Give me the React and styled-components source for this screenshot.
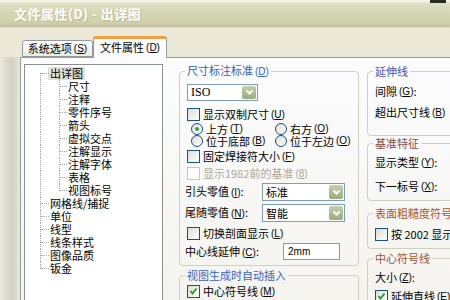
import React from 'react';
import styled, { createGlobalStyle } from 'styled-components';

const GlobalStyle = createGlobalStyle`
  html, body {
    margin: 0;
    padding: 0;
  }
  body {
    width: 450px;
    height: 300px;
    overflow: hidden;
    background: #ece9d8;
    font-family: "Noto Sans CJK SC", "Liberation Sans", sans-serif;
    font-size: 11px;
    line-height: 13px;
    color: #000;
  }
`;

const Window = styled.div`
  width: 450px;
  height: 300px;
  overflow: hidden;
  display: flex;
  flex-direction: column;
  background: #ece9d8;
`;

const TitleBar = styled.div`
  height: 27px;
  flex: none;
  display: flex;
  align-items: center;
  justify-content: space-between;
  padding-left: 14px;
  background: linear-gradient(#f2f2e6 0, #f2f2e6 2px, #dfe0c4 3px, #d4d5b2 14px, #cfcfab 23px, #c6c2a2 26px);
  border-bottom: 1px solid #ddd9c4;
`;

const TitleText = styled.span`
  font-size: 13px;
  font-weight: bold;
  color: #fff;
  letter-spacing: 0.5px;
  text-shadow: 1px 1px 0 #bdbb9c;
`;

const TitleCorner = styled.span`
  align-self: flex-start;
  width: 16px;
  height: 3px;
  margin-right: 4px;
  background: #2b2b26;
`;

const TabStrip = styled.div`
  height: 29px;
  flex: none;
  display: flex;
  align-items: flex-end;
  padding-left: 22px;
`;

const Tab = styled.div`
  position: relative;
  z-index: ${(p) => (p.$active ? 1 : 0)};
  box-sizing: border-box;
  width: ${(p) => (p.$active ? 74 : 71)}px;
  height: ${(p) => (p.$active ? 22 : 17)}px;
  margin-bottom: ${(p) => (p.$active ? -1 : 0)}px;
  display: flex;
  align-items: center;
  justify-content: center;
  border: 1px solid #919b9c;
  border-bottom: ${(p) => (p.$active ? 'none' : '1px solid #919b9c')};
  border-top: ${(p) => (p.$active ? '3px solid #f0a040' : '1px solid #919b9c')};
  border-radius: 3px 3px 0 0;
  background: ${(p) => (p.$active ? '#fcfcfe' : 'linear-gradient(#ffffff, #ecebe6)')};
  padding-bottom: ${(p) => (p.$active ? 2 : 0)}px;
`;

const Body = styled.div`
  flex: none;
  height: 260px;
  display: flex;
`;

const LeftStrip = styled.div`
  width: 20px;
  flex: none;
  background: linear-gradient(90deg, #ebe9de 0, #dedcd1 6px, #d2d0c5 12px, #dfddd2 17px, #ebe9dd 20px);
`;

const TabPanel = styled.div`
  flex: 1;
  display: flex;
  padding: 6px 0 0 3px;
  border-left: 1px solid #919b9c;
  border-top: 1px solid #919b9c;
  background: linear-gradient(#fcfcfe, #f4f3ee);
`;

const Tree = styled.div`
  width: 139px;
  flex: none;
  box-sizing: border-box;
  border: 1px solid #8c8f94;
  border-bottom: none;
  background: #fff;
  padding: 2px 0 0 15px;
`;

const TreeRow = styled.div`
  display: flex;
  height: 13px;
  line-height: 13px;
  white-space: nowrap;
`;

const Guide = styled.span`
  position: relative;
  flex: none;
  width: ${(p) => p.$w}px;
  height: 13px;

  &::before {
    content: '';
    position: absolute;
    left: 0;
    top: ${(p) => (p.$line === 'lower' ? '6px' : '0')};
    bottom: ${(p) => (p.$line === 'upper' ? '6px' : '0')};
    border-left: 1px dotted #a3a3a3;
  }

  &::after {
    content: ${(p) => (p.$branch ? "''" : 'none')};
    position: absolute;
    left: 1px;
    top: 6px;
    width: ${(p) => p.$w - 2}px;
    border-top: 1px dotted #a3a3a3;
  }
`;

const TreeLabel = styled.span`
  padding: 0 2px;
  margin-left: -2px;
  background: ${(p) => (p.$selected ? '#e0dfd9' : 'transparent')};
`;

const Columns = styled.div`
  display: flex;
  gap: 8px;
  margin-left: 16px;
  align-items: flex-start;
`;

const Column = styled.div`
  width: ${(p) => p.$w}px;
  flex: none;
  display: flex;
  flex-direction: column;
`;

const Group = styled.fieldset`
  margin: ${(p) => p.$mt || 0}px 0 0;
  padding: ${(p) => p.$pad};
  border: 1px solid #d0d0bf;
  border-radius: 4px;
  min-width: 0;
  display: flex;
  flex-direction: column;
`;

const Legend = styled.legend`
  padding: 0 2px;
  margin-left: -2px;
  line-height: 13px;
  color: ${(p) => p.$color || '#2f5fcc'};
  white-space: nowrap;
`;

const Key = styled.span`
  font-family: "Liberation Sans", sans-serif;
  font-size: 10px;
  margin-left: 2px;
`;

const Line = styled.div`
  display: flex;
  align-items: center;
  height: ${(p) => p.$h || 13}px;
  margin-top: ${(p) => p.$mt || 0}px;
  margin-left: ${(p) => p.$ml || 0}px;
  white-space: nowrap;
  color: ${(p) => (p.$disabled ? '#aca899' : '#000')};
`;

const CheckBox = styled.span`
  width: 11px;
  height: 11px;
  flex: none;
  margin-right: 3px;
  display: flex;
  align-items: center;
  justify-content: center;
  border: 1px solid ${(p) => (p.$disabled ? '#cac8bb' : '#1c5180')};
  background: ${(p) => (p.$disabled ? '#fff' : 'linear-gradient(135deg, #dcdcd7, #ffffff)')};
`;

const RadioGrid = styled.div`
  display: grid;
  grid-template-columns: 84px auto;
  grid-auto-rows: 12px;
  margin-top: ${(p) => p.$mt}px;
  margin-left: 4px;
  line-height: 12px;
`;

const RadioItem = styled.div`
  display: flex;
  align-items: center;
  height: 12px;
  white-space: nowrap;
`;

const RadioDot = styled.span`
  width: 10px;
  height: 10px;
  flex: none;
  margin-right: 3px;
  border-radius: 50%;
  border: 1px solid #1c5180;
  background: linear-gradient(135deg, #dcdcd7, #ffffff);
  display: flex;
  align-items: center;
  justify-content: center;

  &::after {
    content: ${(p) => (p.$on ? "''" : 'none')};
    width: 4px;
    height: 4px;
    border-radius: 50%;
    background: #36a83a;
  }
`;

const FieldLabel = styled.span`
  width: ${(p) => p.$w}px;
  flex: none;
`;

const SelectBox = styled.div`
  width: ${(p) => p.$w}px;
  height: ${(p) => p.$h}px;
  box-sizing: border-box;
  flex: none;
  display: flex;
  align-items: center;
  justify-content: space-between;
  padding-left: 3px;
  border: 1px solid #7f9db9;
  background: #fff;
  font-family: ${(p) => (p.$serif ? '"Liberation Serif", serif' : 'inherit')};
  font-size: ${(p) => (p.$serif ? 12 : 11)}px;
`;

const DropButton = styled.span`
  align-self: stretch;
  width: 14px;
  margin: 1px;
  border-radius: 2px;
  background: linear-gradient(#c4d0ad, #98ad7d);
  display: flex;
  align-items: center;
  justify-content: center;
`;

const TextBox = styled.div`
  width: ${(p) => p.$w}px;
  height: 17px;
  box-sizing: border-box;
  padding-left: 4px;
  display: flex;
  align-items: center;
  border: 1px solid #7f9db9;
  background: #fff;
  font-family: "Liberation Sans", sans-serif;
  font-size: 10px;
`;

const Chevron = () => (
  <svg width="9" height="7" viewBox="0 0 9 7">
    <polyline points="1.5,1.5 4.5,4.5 7.5,1.5" fill="none" stroke="#fff" strokeWidth="2" />
  </svg>
);

const Tick = () => (
  <svg width="9" height="9" viewBox="0 0 9 9">
    <polyline points="1.5,4 3.5,6.5 7.5,1.5" fill="none" stroke="#21a121" strokeWidth="1.8" />
  </svg>
);

const Mn = ({ k }) => (
  <Key>
    (<u>{k}</u>)
  </Key>
);

const Check = ({ label, k, checked, disabled, mt }) => (
  <Line $mt={mt} $disabled={disabled}>
    <CheckBox $disabled={disabled}>{checked && <Tick />}</CheckBox>
    {label}
    {k && <Mn k={k} />}
  </Line>
);

const Radio = ({ label, k, on }) => (
  <RadioItem>
    <RadioDot $on={on} />
    {label}
    <Mn k={k} />
  </RadioItem>
);

const Select = ({ w, h, value, serif }) => (
  <SelectBox $w={w} $h={h} $serif={serif}>
    {value}
    <DropButton>
      <Chevron />
    </DropButton>
  </SelectBox>
);

const treeItems = [
  { label: '出详图', level: 0, line: 'lower', selected: true },
  { label: '尺寸', level: 1 },
  { label: '注释', level: 1 },
  { label: '零件序号', level: 1 },
  { label: '箭头', level: 1 },
  { label: '虚拟交点', level: 1 },
  { label: '注解显示', level: 1 },
  { label: '注解字体', level: 1 },
  { label: '表格', level: 1 },
  { label: '视图标号', level: 1, line: 'upper' },
  { label: '网格线/捕捉', level: 0 },
  { label: '单位', level: 0 },
  { label: '线型', level: 0 },
  { label: '线条样式', level: 0 },
  { label: '图像品质', level: 0 },
  { label: '钣金', level: 0, line: 'upper' },
];

export default function App() {
  return (
    <Window>
      <GlobalStyle />
      <TitleBar>
        <TitleText>文件属性(D) - 出详图</TitleText>
        <TitleCorner />
      </TitleBar>

      <TabStrip>
        <Tab>
          系统选项
          <Mn k="S" />
        </Tab>
        <Tab $active>
          文件属性
          <Mn k="D" />
        </Tab>
      </TabStrip>

      <Body>
        <LeftStrip />
        <TabPanel>
          <Tree>
            {treeItems.map((item) => (
              <TreeRow key={item.label}>
                {item.level === 0 ? (
                  <Guide $w={10} $line={item.line || 'full'} $branch />
                ) : (
                  <>
                    <Guide $w={19} $line="full" />
                    <Guide $w={9} $line={item.line || 'full'} $branch />
                  </>
                )}
                <TreeLabel $selected={item.selected}>{item.label}</TreeLabel>
              </TreeRow>
            ))}
          </Tree>

          <Columns>
            <Column $w={180}>
              <Group $pad="6px 6px 5px 7px">
                <Legend>
                  尺寸标注标准
                  <Mn k="D" />
                </Legend>
                <Select w={71} h={17} value="ISO" serif />
                <Check label="显示双制尺寸" k="U" mt={7} />
                <RadioGrid $mt={2}>
                  <Radio label="上方" k="T" on />
                  <Radio label="右方" k="O" />
                  <Radio label="位于底部" k="B" />
                  <Radio label="位于左边" k="O" />
                </RadioGrid>
                <Check label="固定焊接符大小" k="F" mt={3} />
                <Check label="显示1982前的基准" k="8" mt={4} disabled />
                <Line $h={18} $mt={3} $ml={-2}>
                  <FieldLabel $w={77}>
                    引头零值
                    <Mn k="I" />:
                  </FieldLabel>
                  <Select w={83} h={18} value="标准" />
                </Line>
                <Line $h={18} $mt={3} $ml={-2}>
                  <FieldLabel $w={77}>
                    尾随零值
                    <Mn k="N" />:
                  </FieldLabel>
                  <Select w={83} h={18} value="智能" />
                </Line>
                <Check label="切换剖面显示" k="L" mt={5} />
                <Line $h={17} $mt={3} $ml={-2}>
                  <FieldLabel $w={98}>
                    中心线延伸
                    <Mn k="C" />:
                  </FieldLabel>
                  <TextBox $w={57}>2mm</TextBox>
                </Line>
              </Group>

              <Group $mt={3} $pad="3px 6px 5px 7px">
                <Legend $color="#3c62c4">视图生成时自动插入</Legend>
                <Check label="中心符号线" k="M" checked />
              </Group>
            </Column>

            <Column $w={170}>
              <Group $mt={1} $pad="7px 6px 16px 7px">
                <Legend $color="#4a4fa8">延伸线</Legend>
                <Line>
                  间隙
                  <Mn k="G" />:
                </Line>
                <Line $mt={8}>
                  超出尺寸线
                  <Mn k="B" />
                </Line>
              </Group>

              <Group $mt={1} $pad="6px 6px 7px 7px">
                <Legend $color="#8a4a3c">基准特征</Legend>
                <Line>
                  显示类型
                  <Mn k="Y" />:
                </Line>
                <Line $mt={11}>
                  下一标号
                  <Mn k="X" />:
                </Line>
              </Group>

              <Group $mt={6} $pad="8px 6px 7px 7px">
                <Legend $color="#a8582c">表面粗糙度符号</Legend>
                <Check label="按 2002 显示方式" />
              </Group>

              <Group $mt={3} $pad="6px 6px 5px 7px">
                <Legend $color="#a0562e">中心符号线</Legend>
                <Line>
                  大小
                  <Mn k="Z" />:
                </Line>
                <Check label="延伸直线" k="E" mt={6} checked />
              </Group>
            </Column>
          </Columns>
        </TabPanel>
      </Body>
    </Window>
  );
}
